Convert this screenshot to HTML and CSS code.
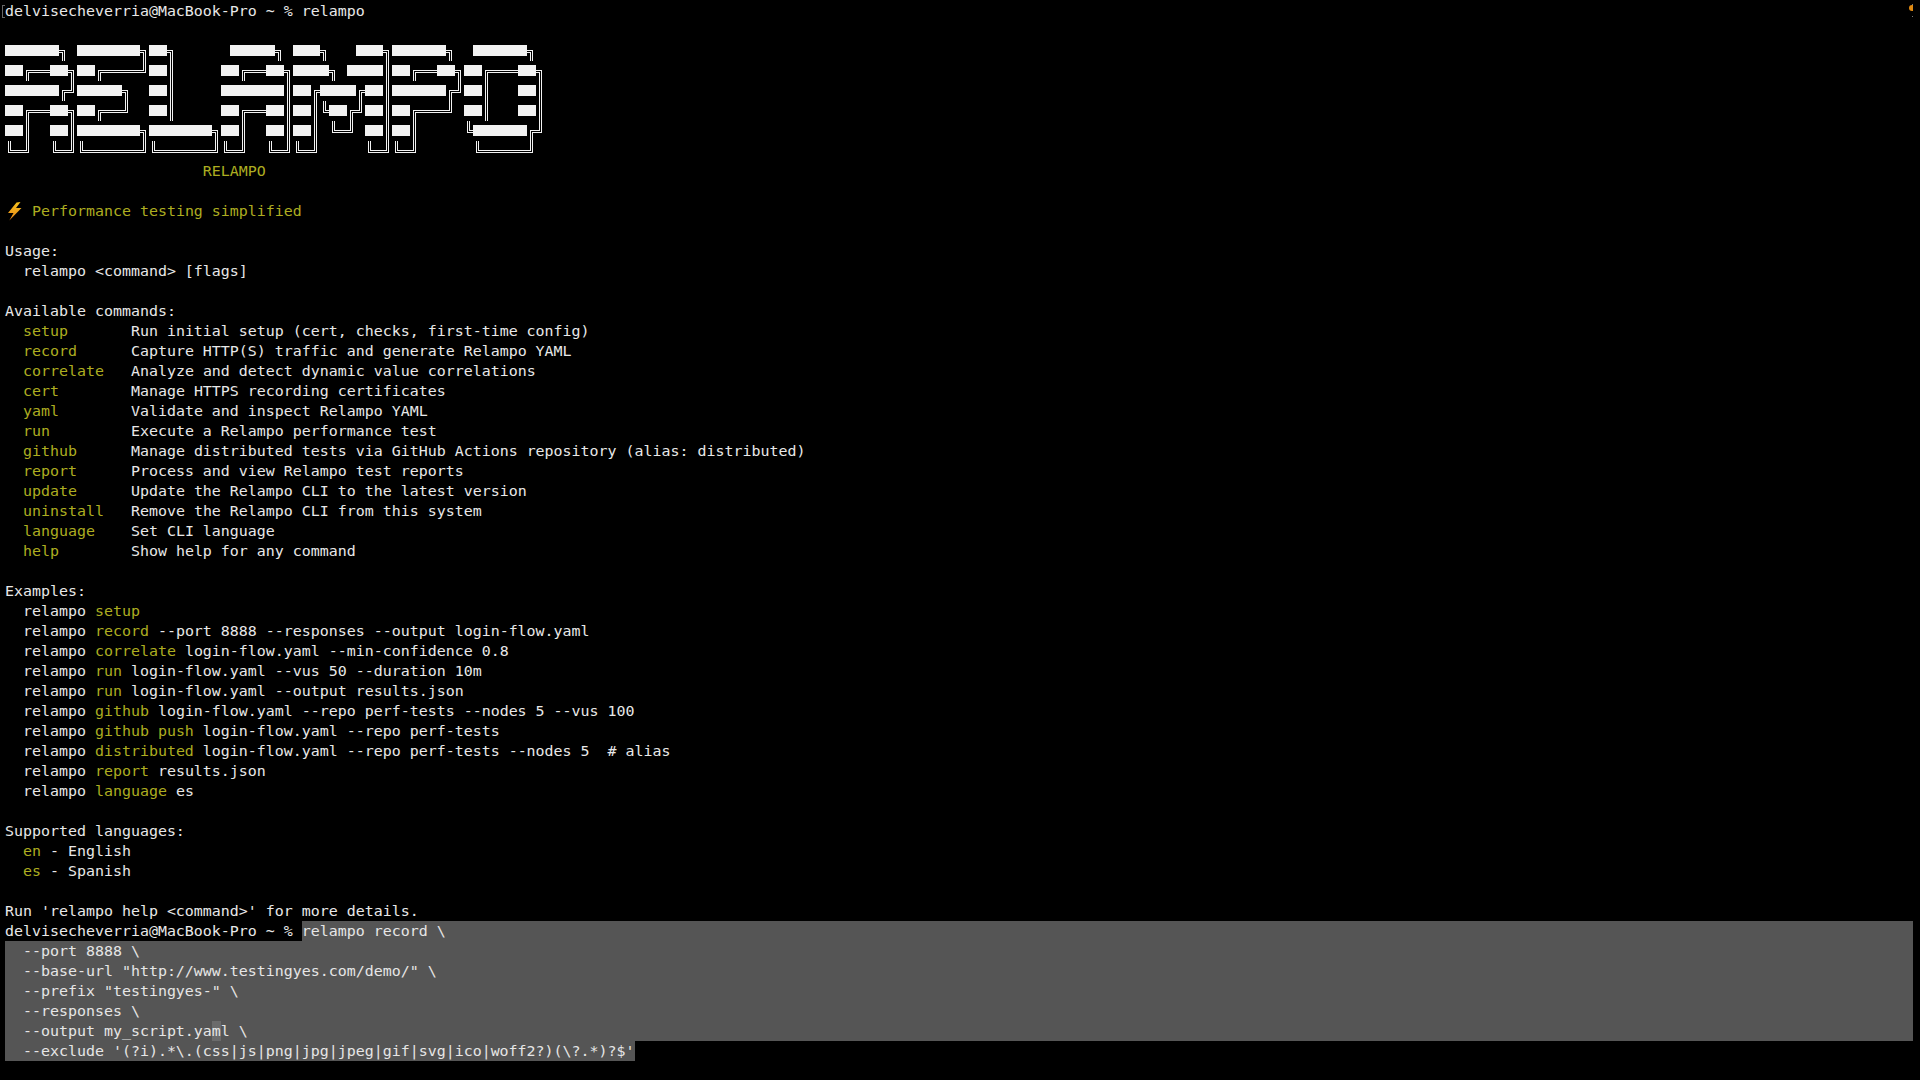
FILE: index.html
```
<!DOCTYPE html>
<html lang="en">
<head>
<meta charset="utf-8">
<title>relampo</title>
<link rel="stylesheet" href="styles.css">
</head>
<body>
<main class="term">
<span class="mark-left"></span>
<span class="mark-dot"></span>
<span class="mark-right"></span>
<div class="line">delvisecheverria@MacBook-Pro ~ % relampo</div>
<div class="line"></div>
<div class="line art"><b>██████</b><i class="tr">╗</i> <b>███████</b><i class="tr">╗</i><b>██</b><i class="tr">╗</i>      <b>█████</b><i class="tr">╗</i> <b>███</b><i class="tr">╗</i>   <b>███</b><i class="tr">╗</i><b>██████</b><i class="tr">╗</i>  <b>██████</b><i class="tr">╗</i> </div>
<div class="line art"><b>██</b><i class="tl">╔</i><i class="h">══</i><b>██</b><i class="tr">╗</i><b>██</b><i class="tl">╔</i><i class="h">════</i><i class="br">╝</i><b>██</b><i class="v">║</i>     <b>██</b><i class="tl">╔</i><i class="h">══</i><b>██</b><i class="tr">╗</i><b>████</b><i class="tr">╗</i> <b>████</b><i class="v">║</i><b>██</b><i class="tl">╔</i><i class="h">══</i><b>██</b><i class="tr">╗</i><b>██</b><i class="tl">╔</i><i class="h">═══</i><b>██</b><i class="tr">╗</i></div>
<div class="line art"><b>██████</b><i class="tl">╔</i><i class="br">╝</i><b>█████</b><i class="tr">╗</i>  <b>██</b><i class="v">║</i>     <b>███████</b><i class="v">║</i><b>██</b><i class="tl">╔</i><b>████</b><i class="tl">╔</i><b>██</b><i class="v">║</i><b>██████</b><i class="tl">╔</i><i class="br">╝</i><b>██</b><i class="v">║</i>   <b>██</b><i class="v">║</i></div>
<div class="line art"><b>██</b><i class="tl">╔</i><i class="h">══</i><b>██</b><i class="tr">╗</i><b>██</b><i class="tl">╔</i><i class="h">══</i><i class="br">╝</i>  <b>██</b><i class="v">║</i>     <b>██</b><i class="tl">╔</i><i class="h">══</i><b>██</b><i class="v">║</i><b>██</b><i class="v">║</i><i class="bl">╚</i><b>██</b><i class="tl">╔</i><i class="br">╝</i><b>██</b><i class="v">║</i><b>██</b><i class="tl">╔</i><i class="h">═══</i><i class="br">╝</i> <b>██</b><i class="v">║</i>   <b>██</b><i class="v">║</i></div>
<div class="line art"><b>██</b><i class="v">║</i>  <b>██</b><i class="v">║</i><b>███████</b><i class="tr">╗</i><b>███████</b><i class="tr">╗</i><b>██</b><i class="v">║</i>  <b>██</b><i class="v">║</i><b>██</b><i class="v">║</i> <i class="bl">╚</i><i class="h">═</i><i class="br">╝</i> <b>██</b><i class="v">║</i><b>██</b><i class="v">║</i>     <i class="bl">╚</i><b>██████</b><i class="tl">╔</i><i class="br">╝</i></div>
<div class="line art"><i class="bl">╚</i><i class="h">═</i><i class="br">╝</i>  <i class="bl">╚</i><i class="h">═</i><i class="br">╝</i><i class="bl">╚</i><i class="h">══════</i><i class="br">╝</i><i class="bl">╚</i><i class="h">══════</i><i class="br">╝</i><i class="bl">╚</i><i class="h">═</i><i class="br">╝</i>  <i class="bl">╚</i><i class="h">═</i><i class="br">╝</i><i class="bl">╚</i><i class="h">═</i><i class="br">╝</i>     <i class="bl">╚</i><i class="h">═</i><i class="br">╝</i><i class="bl">╚</i><i class="h">═</i><i class="br">╝</i>      <i class="bl">╚</i><i class="h">═════</i><i class="br">╝</i> </div>
<div class="line y">                      RELAMPO</div>
<div class="line"></div>
<div class="line y"><svg class="bolt" viewBox="0 0 18 20" aria-label="⚡"><defs><linearGradient id="boltFill" x1="0" y1="0" x2="0" y2="1"><stop offset="0" stop-color="#f7c21c"/><stop offset="1" stop-color="#e8861a"/></linearGradient></defs><polygon points="15.5,1 11.5,1.5 3,12 8.5,12 4.3,19.5 16.5,7 11,7" fill="url(#boltFill)"/></svg> Performance testing simplified</div>
<div class="line"></div>
<div class="line">Usage:</div>
<div class="line">  relampo &lt;command&gt; [flags]</div>
<div class="line"></div>
<div class="line">Available commands:</div>
<div class="line">  <span class="y">setup</span>       Run initial setup (cert, checks, first-time config)</div>
<div class="line">  <span class="y">record</span>      Capture HTTP(S) traffic and generate Relampo YAML</div>
<div class="line">  <span class="y">correlate</span>   Analyze and detect dynamic value correlations</div>
<div class="line">  <span class="y">cert</span>        Manage HTTPS recording certificates</div>
<div class="line">  <span class="y">yaml</span>        Validate and inspect Relampo YAML</div>
<div class="line">  <span class="y">run</span>         Execute a Relampo performance test</div>
<div class="line">  <span class="y">github</span>      Manage distributed tests via GitHub Actions repository (alias: distributed)</div>
<div class="line">  <span class="y">report</span>      Process and view Relampo test reports</div>
<div class="line">  <span class="y">update</span>      Update the Relampo CLI to the latest version</div>
<div class="line">  <span class="y">uninstall</span>   Remove the Relampo CLI from this system</div>
<div class="line">  <span class="y">language</span>    Set CLI language</div>
<div class="line">  <span class="y">help</span>        Show help for any command</div>
<div class="line"></div>
<div class="line">Examples:</div>
<div class="line">  relampo <span class="y">setup</span></div>
<div class="line">  relampo <span class="y">record</span> --port 8888 --responses --output login-flow.yaml</div>
<div class="line">  relampo <span class="y">correlate</span> login-flow.yaml --min-confidence 0.8</div>
<div class="line">  relampo <span class="y">run</span> login-flow.yaml --vus 50 --duration 10m</div>
<div class="line">  relampo <span class="y">run</span> login-flow.yaml --output results.json</div>
<div class="line">  relampo <span class="y">github</span> login-flow.yaml --repo perf-tests --nodes 5 --vus 100</div>
<div class="line">  relampo <span class="y">github push</span> login-flow.yaml --repo perf-tests</div>
<div class="line">  relampo <span class="y">distributed</span> login-flow.yaml --repo perf-tests --nodes 5  # alias</div>
<div class="line">  relampo <span class="y">report</span> results.json</div>
<div class="line">  relampo <span class="y">language</span> es</div>
<div class="line"></div>
<div class="line">Supported languages:</div>
<div class="line">  <span class="y">en</span> - English</div>
<div class="line">  <span class="y">es</span> - Spanish</div>
<div class="line"></div>
<div class="line">Run 'relampo help &lt;command&gt;' for more details.</div>
<div class="line prompt-row"><span>delvisecheverria@MacBook-Pro ~ % </span><span class="sel-fill">relampo record \</span></div>
<div class="line sel">  --port 8888 \</div>
<div class="line sel">  --base-url "http://www.testingyes.com/demo/" \</div>
<div class="line sel">  --prefix "testingyes-" \</div>
<div class="line sel">  --responses \</div>
<div class="line sel">  --output my_script.ya<span class="cursor">m</span>l \</div>
<div class="line"><span class="sel-part">  --exclude '(?i).*\.(css|js|png|jpg|jpeg|gif|svg|ico|woff2?)(\?.*)?$'</span></div>
</main>
</body>
</html>
```
FILE: styles.css
```
html, body { margin: 0; height: 100%; background: #000; }

.term {
  position: relative;
  box-sizing: border-box;
  width: 1913px;
  height: 1080px;
  overflow: hidden;
  padding: 1px 0 0 5px;
  font: 14.95px/20px "DejaVu Sans Mono", "Liberation Mono", monospace;
  color: #e8e8e8;
}

.line { height: 20px; white-space: pre; }
.y { color: #adad20; }

/* ASCII banner: real characters, painted on a 9x20 terminal cell */
.art b, .art i {
  --ink: linear-gradient(#f2f2f2, #f2f2f2);
  display: inline-block;
  height: 20px;
  vertical-align: top;
  color: transparent;
  font-weight: normal;
  font-style: normal;
  background-repeat: no-repeat;
}
.art b { background-image: var(--ink); background-position: 0 4px; background-size: 100% 11px; }
.art .h {
  background-image: var(--ink), var(--ink);
  background-position: 0 9px, 0 11px;
  background-size: 100% 1px;
}
.art .v {
  background-image: var(--ink), var(--ink);
  background-position: 3px 0, 5px 0;
  background-size: 1px 100%;
}
.art .tr {
  background-image: var(--ink), var(--ink), var(--ink), var(--ink);
  background-position: 0 9px, 5px 9px, 0 11px, 3px 11px;
  background-size: 6px 1px, 1px 11px, 4px 1px, 1px 9px;
}
.art .tl {
  background-image: var(--ink), var(--ink), var(--ink), var(--ink);
  background-position: 3px 9px, 3px 9px, 5px 11px, 5px 11px;
  background-size: 6px 1px, 1px 11px, 4px 1px, 1px 9px;
}
.art .br {
  background-image: var(--ink), var(--ink), var(--ink), var(--ink);
  background-position: 0 11px, 5px 0, 0 9px, 3px 0;
  background-size: 6px 1px, 1px 12px, 4px 1px, 1px 10px;
}
.art .bl {
  background-image: var(--ink), var(--ink), var(--ink), var(--ink);
  background-position: 3px 11px, 3px 0, 5px 9px, 5px 0;
  background-size: 6px 1px, 1px 12px, 4px 1px, 1px 10px;
}

.bolt { display: inline-block; width: 18px; height: 20px; vertical-align: top; }

/* Terminal selection */
.prompt-row { display: flex; }
.sel-fill { flex: 1; background: #555; }
.sel { background: #555; color: #e6e6e6; }
.sel-fill { color: #e6e6e6; }
.sel-part { display: inline-block; height: 20px; background: #555; color: #e6e6e6; vertical-align: top; }
.cursor { display: inline-block; height: 20px; background: #6b6b6b; vertical-align: top; }

/* Shell integration marks */
.mark-left {
  position: absolute; left: 2px; top: 5px;
  width: 2px; height: 11px;
  border: 1px solid #666; border-right: 0;
}
.mark-right {
  position: absolute; left: 1912px; top: 4px;
  width: 2px; height: 11px;
  border: 1px solid #777; border-left: 0;
}
.mark-dot {
  position: absolute; left: 1909px; top: 5px;
  width: 6px; height: 6px;
  border-radius: 50%;
  background: #e08a12;
}
```
